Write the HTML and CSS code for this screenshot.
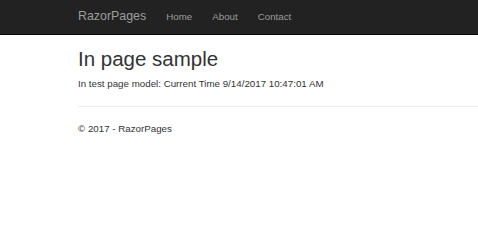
FILE: index.html
```html
<!DOCTYPE html>
<html lang="en">
<head>
    <meta charset="UTF-8">
    <title>In page sample - RazorPages</title>
    <link rel="stylesheet" href="styles.css">
</head>
<body>
    <nav class="navbar">
        <div class="container nav-row">
            <a class="brand" href="#">RazorPages</a>
            <ul class="nav-links">
                <li><a href="#">Home</a></li>
                <li><a href="#">About</a></li>
                <li><a href="#">Contact</a></li>
            </ul>
        </div>
    </nav>
    <div class="container body-content">
        <h2>In page sample</h2>
        <p>In test page model: Current Time 9/14/2017 10:47:01 AM</p>
        <hr>
        <footer>
            <p>&copy; 2017 - RazorPages</p>
        </footer>
    </div>
</body>
</html>
```

FILE: styles.css
```css
body {
    margin: 0;
    font-family: 'Liberation Sans', Arial, sans-serif;
    font-size: 9.75px;
    line-height: 1.43;
    color: #333;
    background: #fff;
}
.container {
    padding-left: 78px;
}
.navbar {
    background: #222;
    border-bottom: 1px solid #080808;
    height: 34px;
}
.nav-row {
    display: flex;
    align-items: center;
    height: 34px;
}
.brand {
    font-size: 12.4px;
    color: #9d9d9d;
    text-decoration: none;
    margin-right: 10px;
}
.nav-links {
    display: flex;
    list-style: none;
    margin: 0;
    padding: 0;
}
.nav-links a {
    display: block;
    padding: 0 10px;
    color: #9d9d9d;
    text-decoration: none;
    font-size: 9.75px;
}
h2 {
    font-size: 20.5px;
    font-weight: 500;
    line-height: 1.1;
    margin: 13px 0 6.5px;
}
p {
    margin: 0 0 7px;
}
hr {
    border: 0;
    border-top: 1px solid #eee;
    margin: 15px 0;
}
```
